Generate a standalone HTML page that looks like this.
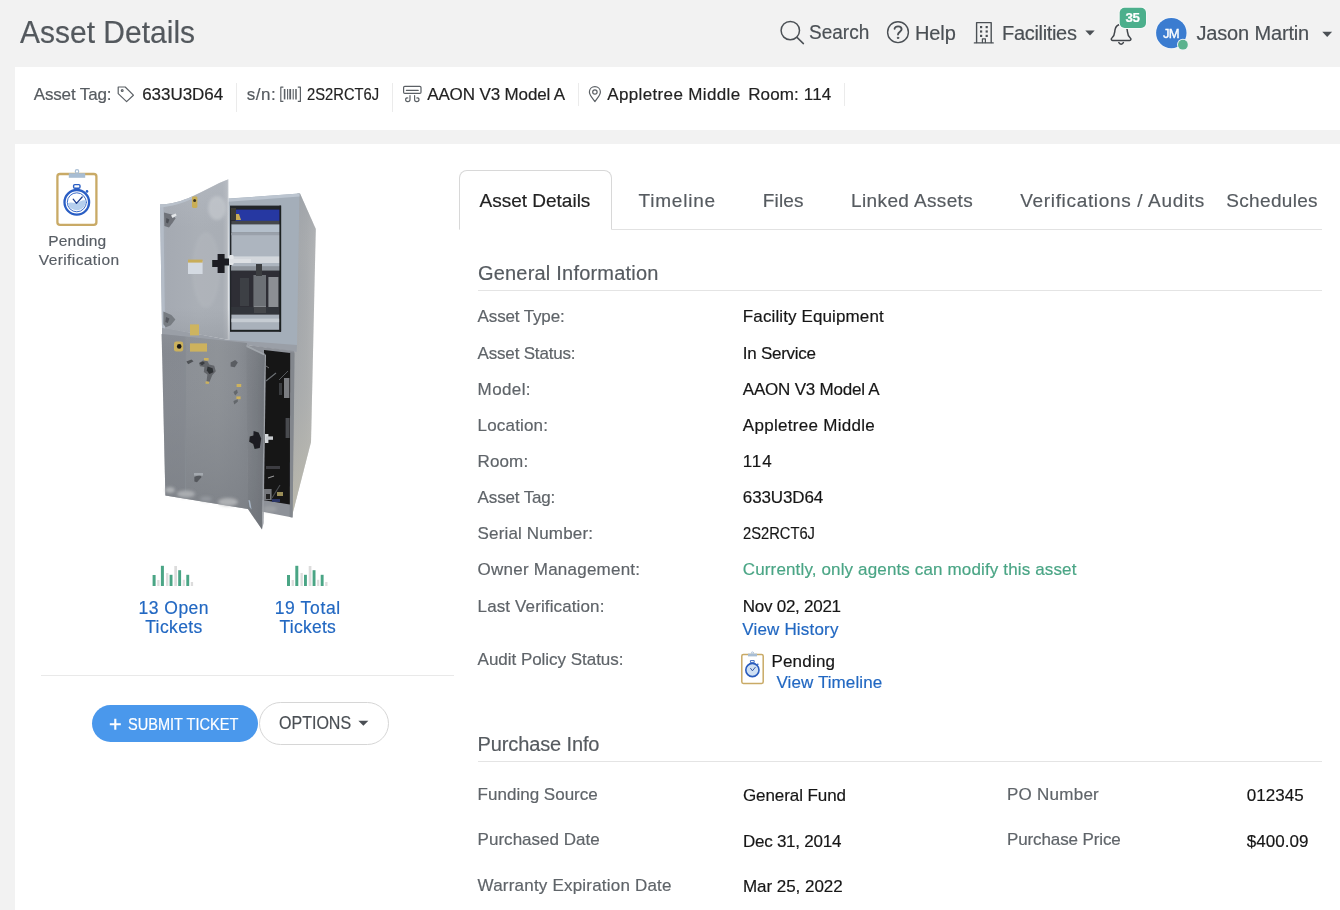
<!DOCTYPE html>
<html lang="en">
<head>
<meta charset="utf-8">
<title>Asset Details</title>
<style>
html,body{margin:0;padding:0;}
body{width:1340px;height:910px;overflow:hidden;background:#f2f2f2;font-family:"Liberation Sans",sans-serif;}
#page{position:relative;width:1340px;height:910px;overflow:hidden;}
#layer{position:absolute;left:0;top:0;width:1340px;height:910px;will-change:transform;transform:translateZ(0);}
.t{position:absolute;white-space:pre;line-height:1;font-family:"Liberation Sans",sans-serif;-webkit-text-stroke:0.18px;}
.abs{position:absolute;}
.panel{position:absolute;background:#fff;}
.sep{position:absolute;width:1px;background:#ebebeb;}
.hr{position:absolute;height:1px;background:#e4e4e4;}
svg{position:absolute;overflow:visible;}
</style>
</head>
<body>
<div id="page">
<div id="layer">

<!-- panels -->
<div class="panel" style="left:15px;top:67px;width:1325px;height:63px;"></div>
<div class="panel" style="left:15px;top:144px;width:1325px;height:766px;"></div>
<!-- info bar separators -->
<div class="sep" style="left:236px;top:83px;height:29px;"></div>
<div class="sep" style="left:392px;top:83px;height:29px;"></div>
<div class="sep" style="left:578px;top:83px;height:23px;"></div>
<div class="sep" style="left:844px;top:83px;height:23px;"></div>
<!-- left panel hr -->
<div class="hr" style="left:41px;top:675px;width:413px;background:#e9e9e9;"></div>
<!-- buttons -->
<div class="abs" style="left:92px;top:705px;width:166px;height:37px;border-radius:19px;background:#4a98ec;"></div>
<div class="abs" style="left:259px;top:702px;width:128px;height:41px;border-radius:22px;background:#fff;border:1px solid #d6d6d6;"></div>
<!-- tabs -->
<div class="hr" style="left:460px;top:229px;width:862px;background:#e2e2e2;"></div>
<div class="abs" style="left:459px;top:170px;width:151px;height:58px;border:1px solid #d8d8d8;border-bottom:1px solid #fff;border-radius:8px 8px 0 0;background:#fff;box-sizing:content-box;"></div>
<!-- section rules -->
<div class="hr" style="left:478px;top:290px;width:844px;"></div>
<div class="hr" style="left:478px;top:761px;width:844px;"></div>

<!-- cabinet photo approximation (page coordinates) -->
<svg style="left:0;top:0" width="1340" height="910" viewBox="0 0 1340 910">
  <defs>
    <filter id="soft" x="-5%" y="-5%" width="110%" height="110%"><feGaussianBlur stdDeviation="0.7"/></filter>
    <filter id="soft2" x="-20%" y="-20%" width="140%" height="140%"><feGaussianBlur stdDeviation="1.4"/></filter>
    <linearGradient id="gDoor" x1="0" y1="0" x2="1" y2="0">
      <stop offset="0" stop-color="#a6aeb9"/><stop offset="0.1" stop-color="#a5aab2"/>
      <stop offset="0.55" stop-color="#aaafb6"/><stop offset="0.9" stop-color="#a9aeb5"/>
      <stop offset="0.965" stop-color="#b4b8be"/><stop offset="0.985" stop-color="#dfe2e5"/><stop offset="1" stop-color="#d5d8dc"/>
    </linearGradient>
    <linearGradient id="gDoorV" x1="0" y1="0" x2="0" y2="1">
      <stop offset="0" stop-color="#b9bec6" stop-opacity="0.45"/><stop offset="0.3" stop-color="#b9bec6" stop-opacity="0"/>
      <stop offset="0.8" stop-color="#959aa1" stop-opacity="0"/><stop offset="1" stop-color="#8f949b" stop-opacity="0.45"/>
    </linearGradient>
    <linearGradient id="gSide" x1="0" y1="0" x2="1" y2="0">
      <stop offset="0" stop-color="#a0a4a9"/><stop offset="0.6" stop-color="#a8abae"/><stop offset="1" stop-color="#b3b5b7"/>
    </linearGradient>
    <linearGradient id="gSideV" x1="0" y1="0" x2="0" y2="1">
      <stop offset="0" stop-color="#989ea6" stop-opacity="0.5"/><stop offset="0.25" stop-color="#b0b0b0" stop-opacity="0"/>
      <stop offset="0.6" stop-color="#b8b7b0" stop-opacity="0.25"/><stop offset="1" stop-color="#cfc8ad" stop-opacity="0.6"/>
    </linearGradient>
    <linearGradient id="gLow" x1="0" y1="0" x2="1" y2="0">
      <stop offset="0" stop-color="#858990"/><stop offset="0.26" stop-color="#868a91"/>
      <stop offset="0.29" stop-color="#8c9096"/><stop offset="0.65" stop-color="#8f9398"/><stop offset="0.88" stop-color="#898d93"/><stop offset="1" stop-color="#82868c"/>
    </linearGradient>
    <linearGradient id="gLowV" x1="0" y1="0" x2="0" y2="1">
      <stop offset="0" stop-color="#9297a0" stop-opacity="0.35"/><stop offset="0.12" stop-color="#8f9398" stop-opacity="0"/>
      <stop offset="0.6" stop-color="#80848a" stop-opacity="0.4"/><stop offset="1" stop-color="#7c8086" stop-opacity="0.8"/>
    </linearGradient>
    <linearGradient id="gSDoorV" x1="0" y1="0" x2="0" y2="1">
      <stop offset="0" stop-color="#8d9197" stop-opacity="0.15"/><stop offset="0.35" stop-color="#7d8187" stop-opacity="0"/>
      <stop offset="1" stop-color="#6c7076" stop-opacity="0.5"/>
    </linearGradient>
    <linearGradient id="gSDoor" x1="0" y1="0" x2="1" y2="0">
      <stop offset="0" stop-color="#7f8389"/><stop offset="0.5" stop-color="#787c82"/><stop offset="1" stop-color="#6f7379"/>
    </linearGradient>
  </defs>
  <g filter="url(#soft)">
    <!-- side panel -->
    <path d="M297.4 193.5 L300 193.5 L315.8 229 L311 442 L291.6 517.5 L292 350 Z" fill="url(#gSide)"/>
    <path d="M297.4 193.5 L300 193.5 L315.8 229 L311 442 L291.6 517.5 L292 350 Z" fill="url(#gSideV)"/>
    <!-- upper body front -->
    <path d="M228 198.6 L299.4 193.6 L297 346 L228 342 Z" fill="#a4aeb9"/>
    <path d="M228 198.8 L299.4 193.6 L299.6 196.6 L228 201.8 Z" fill="#bcc5d0"/>
    <!-- upper opening -->
    <rect x="230" y="205.6" width="51" height="126" fill="#24262b"/>
    <rect x="235.6" y="209.6" width="45" height="11.8" fill="#2637a2"/>
    <rect x="231" y="208" width="5" height="12" fill="#3a3a36"/>
    <path d="M236 214 l3 0 l2 6 l-5 0 z" fill="#c9ad57"/>
    <rect x="231.4" y="224.2" width="49" height="8" fill="#b4bfcb"/>
    <rect x="231.4" y="220.8" width="49" height="3.4" fill="#45474b"/>
    <rect x="231.4" y="232.2" width="48.6" height="38.4" fill="#adb5bf"/>
    <rect x="231.4" y="233" width="48.6" height="2.2" fill="#9aa1ab"/>
    <rect x="232" y="256.4" width="48" height="6.6" fill="#d3d7dc"/>
    <rect x="231.4" y="266.2" width="48.6" height="4.6" fill="#8d939b"/>
    <rect x="231.4" y="270.6" width="48.6" height="44" fill="#2d2f34"/>
    <rect x="240" y="278" width="9" height="28" fill="#3d3f44"/>
    <rect x="253.4" y="275" width="12.6" height="33" fill="#6c6f74"/>
    <rect x="268.4" y="277" width="10" height="30" fill="#8c8f94"/>
    <rect x="256" y="264" width="6" height="12" fill="#3a3c40"/>
    <rect x="254" y="306" width="12" height="7" fill="#85888d"/>
    <rect x="231.4" y="307" width="48.6" height="7.6" fill="#35373c" opacity="0.8"/>
    <rect x="231.4" y="314.6" width="48" height="15.4" fill="#a9b1bb"/>
    <rect x="231.4" y="318.6" width="48" height="3.6" fill="#c6ccd3"/>
    <rect x="279.4" y="205.6" width="1.8" height="126" fill="#1f2023"/>
    <rect x="230" y="329.8" width="51" height="1.8" fill="#1f2023"/>
    <!-- strip between upper and lower -->
    <path d="M162 327 L229 340 L297 345 L296.6 352 L246 345 L162 339 Z" fill="#9a9fa7"/>
    <!-- lower front -->
    <path d="M161.6 334 L247 343 L248 509 L165.4 495.6 Z" fill="url(#gLow)"/>
    <path d="M161.6 334 L247 343 L248 509 L165.4 495.6 Z" fill="url(#gLowV)"/>
    <path d="M185 345 L185.6 492" stroke="#868b91" stroke-width="1.2" fill="none"/>
    <!-- lower opening -->
    <path d="M247 345 L294 351 L292.4 517.6 L248 509 Z" fill="#8e9299"/>
    <path d="M289.6 352 L294.6 352.6 L292.6 517.6 L289.6 517 Z" fill="#83878d"/>
    <path d="M264 350 L290.2 353 L289.8 504.6 L262.6 500 Z" fill="#151516"/>
    <rect x="284" y="378" width="5.4" height="20" fill="#7b7e82"/>
    <rect x="285.6" y="418" width="4" height="20" fill="#4a4c50"/>
    <path d="M266 381 L276 373" stroke="#6d7074" stroke-width="1.2"/>
    <path d="M279 380 L288 371" stroke="#55585c" stroke-width="1"/>
    <path d="M266 366 l3 2" stroke="#777" stroke-width="1"/>
    <rect x="279" y="383" width="3" height="12" fill="#3a3c40"/>
    <rect x="266" y="466" width="14" height="3" fill="#3c3e42"/>
    <rect x="263.6" y="489" width="8" height="11" fill="#74777b"/>
    <rect x="266" y="494" width="4" height="5" fill="#222"/>
    <path d="M268 478 l6 -2" stroke="#999" stroke-width="1.2"/>
    <path d="M272 498 L280 485" stroke="#4a4c50" stroke-width="1.2"/>
    <rect x="277" y="492" width="6" height="4" fill="#9b8e58"/>
    <rect x="272" y="499" width="8" height="3" fill="#2b3566"/>
    <!-- small open door -->
    <path d="M246.4 344.6 L264.4 353.6 L262 529.6 L247.6 508.6 Z" fill="url(#gSDoor)"/>
    <path d="M246.4 344.6 L264.4 353.6 L262 529.6 L247.6 508.6 Z" fill="url(#gSDoorV)"/>
    <path d="M264.4 353.6 L266 355 L263.6 523 L262 529.6 Z" fill="#9a9ea4"/>
    <path d="M246.4 344.6 L264.4 353.6 L264.4 355.6 L246.4 347 Z" fill="#a0a5ab"/>
    <!-- upper open door -->
    <path d="M160 204.6 C172 203.8 182 201 192 196.4 C205 190.4 216 184 228.4 179.2 L229.6 340 L162 327.8 Z" fill="url(#gDoor)"/>
    <path d="M160 204.6 C172 203.8 182 201 192 196.4 C205 190.4 216 184 228.4 179.2 L229.6 340 L162 327.8 Z" fill="url(#gDoorV)"/>
    <path d="M160 204.6 L163.4 204.4 L165 328.4 L162 327.8 Z" fill="#b4bcc7"/>
    <path d="M160 204.6 C172 203.8 182 201 192 196.4 L192 199 C182 203.4 172 206.4 160 207.4 Z" fill="#b9c1cb"/>
    <ellipse cx="217" cy="208" rx="9" ry="12" fill="#c9cdd2" opacity="0.6" filter="url(#soft2)"/>
    <ellipse cx="206" cy="270" rx="14" ry="38" fill="#b9bdc3" opacity="0.35" filter="url(#soft2)"/>
  </g>
  <g filter="url(#soft)">
    <!-- hinges -->
    <path d="M164 212.6 l7.6 2 l4 3.6 l-3 4.6 l-3.6 4.6 l-4.6 -1.4 z" fill="#6f737a"/>
    <path d="M171 215.4 l4.6 -2 l1 2 l-4 2.6 z" fill="#e4e7ea"/>
    <path d="M166.4 218 l3 1.4 l-1.4 4 l-2 -0.8 z" fill="#4d5056"/>
    <path d="M163.4 311.6 l8 3.4 l4 4.6 l-4.6 5.6 l-5 2 l-2.4 -3 z" fill="#777b82"/>
    <path d="M166 317 l3.4 1.6 l-1.6 4.4 l-2.4 -1 z" fill="#55585e"/>
    <!-- labels on door -->
    <rect x="192" y="196.4" width="5.4" height="11.6" rx="1.4" fill="#c9ae55"/>
    <circle cx="194.6" cy="200.6" r="1.5" fill="#3a3524"/>
    <rect x="188" y="261" width="14.6" height="13" fill="#d4dae2"/>
    <rect x="188" y="259.6" width="14.6" height="3" fill="#c8ad5a"/>
    <rect x="190" y="324.4" width="9" height="11" fill="#cdb45f"/>
    <!-- door handle -->
    <path d="M217.6 254 h7 v4.6 h4.4 v7 h-4.4 v7.4 h-7 v-6 h-5.4 v-7 h5.4 z" fill="#1d1e21"/>
    <rect x="229" y="255" width="4.6" height="10" rx="1.4" fill="#e3e6e9"/>
    <rect x="229" y="259" width="22" height="4" fill="#dde0e4"/>
    <!-- lower labels -->
    <rect x="174" y="341.6" width="9.2" height="10" rx="2.4" fill="#cbb15c"/>
    <circle cx="179.2" cy="346.4" r="2.3" fill="#191919"/>
    <rect x="190" y="343.4" width="17" height="8.2" fill="#cdb25d"/>
    <rect x="204" y="358" width="4.6" height="2.6" fill="#cdb25d"/>
    <rect x="205.6" y="381.4" width="3.4" height="2.4" fill="#cdb25d"/>
    <rect x="236.6" y="384" width="4.6" height="3" fill="#cdb25d"/>
    <rect x="236.4" y="396.4" width="4.2" height="2.8" fill="#cdb25d"/>
    <!-- dark blobs on lower front -->
    <g filter="url(#soft)">
    <path d="M186.4 361.6 l5 -2.2 l2.2 1.8 l-5.4 3 z" fill="#4f5257"/>
    <path d="M199 363 l4 -2.6 l4.6 0.8 l1.6 3.4 l5 1.2 l1.6 5.4 l-3.6 4 l-2.6 6.6 l-3 -0.8 l0.8 -6.4 l-3.6 -2.6 l0.6 -5 l-4.4 -0.8 z" fill="#62656a"/>
    <path d="M207.6 366.6 l5 1.6 l0.8 4 l-4 1.8 l-2.6 -3.4 z" fill="#2f3034"/>
    <path d="M199.4 363 l3.6 -1.6 l2 1.6 l-3 2.4 z" fill="#3a3c40"/>
    <path d="M230.6 362.6 l4.6 -2.6 l2.6 2.6 l-3 4.6 l-4.2 -0.8 z" fill="#5a5d62"/>
    <path d="M233.4 392 l3.6 -2.6 l0.8 3.4 l-2.6 2.6 z M233.4 401 l4.4 -1.8 l0 2.6 l-3.6 2.6 z" fill="#64676c"/>
    <path d="M194.4 477 l5.4 -2.6 l1.8 2.6 l-4.6 5.2 l-2.6 -0.8 z" fill="#55585d"/>
    <rect x="194" y="473" width="9" height="2.6" fill="#a4a9af"/>
    </g>
    <!-- latch on small door -->
    <path d="M253.6 431 l5 1.4 l2.6 6 l-1.4 9.6 l-5.2 1 l-1.4 -5 l-4 -2.2 l0.6 -5.4 l3.6 -1 z" fill="#1c1d20"/>
    <rect x="265" y="434" width="3.4" height="9" fill="#d8dbde"/>
    <rect x="266" y="436.4" width="7" height="3.4" fill="#c9ccd0"/>
    <!-- base patches -->
    <g filter="url(#soft2)">
      <ellipse cx="170" cy="490" rx="5" ry="3" fill="#b9bcbe" opacity="0.8"/>
      <ellipse cx="186" cy="494" rx="9" ry="3.4" fill="#b4b7ba" opacity="0.8"/>
      <ellipse cx="228" cy="502" rx="10" ry="4" fill="#b6b9bb" opacity="0.85"/>
      <ellipse cx="206" cy="499" rx="6" ry="2.4" fill="#9da1a6" opacity="0.7"/>
      <ellipse cx="270" cy="509" rx="7" ry="3" fill="#a4a7aa" opacity="0.7"/>
    </g>
    <path d="M248.4 500 l1.6 0.4 l1.6 9 l-2 -2.4 z" fill="#a9b6c6"/>
  </g>
</svg>

<!-- icon layer (page coordinates) -->
<svg style="left:0;top:0" width="1340" height="910" viewBox="0 0 1340 910" fill="none" stroke-linecap="round" stroke-linejoin="round">
  <!-- search -->
  <g stroke="#4b5055" stroke-width="1.5">
    <circle cx="790.3" cy="30.6" r="9.2"/>
    <path d="M797 37.4 L803.4 43.6"/>
  </g>
  <!-- help -->
  <g stroke="#4b5055" stroke-width="1.4">
    <circle cx="898" cy="32.2" r="10.4"/>
    <path d="M894.6 28.8 C894.6 25.6 901.6 25.4 901.6 29.2 C901.6 31.6 898 31.8 898 34.6" stroke-width="1.9"/>
    <circle cx="898" cy="37.9" r="0.8" fill="#4b5055" stroke-width="0.8"/>
  </g>
  <!-- building -->
  <g stroke="#4b5055" stroke-width="1.4">
    <path d="M976.6 42.6 V22.6 H991.2 V42.6"/>
    <path d="M974.4 42.9 H993.2"/>
    <path d="M982.4 42.6 V38.8 H985.4 V42.6" stroke-width="1.2"/>
  </g>
  <g fill="#4b5055">
    <rect x="980" y="26" width="2.2" height="2.2"/><rect x="985.6" y="26" width="2.2" height="2.2"/>
    <rect x="980" y="30.4" width="2.2" height="2.2"/><rect x="985.6" y="30.4" width="2.2" height="2.2"/>
    <rect x="980" y="34.8" width="2.2" height="2.2"/><rect x="985.6" y="34.8" width="2.2" height="2.2"/>
    <!-- carets -->
    <path d="M1085.3 30.6 H1094.7 L1090 35.4 Z"/>
    <path d="M1322.3 31.8 H1332.1 L1327.2 37 Z"/>
    <path d="M358.4 720.8 H368.4 L363.4 725.8 Z" fill="#4a4f54"/>
  </g>
  <!-- bell -->
  <g stroke="#42464b" stroke-width="1.5">
    <path d="M1112.6 40.4 C1111.2 40.4 1110.8 38.9 1111.9 38 C1115.2 35.2 1114.5 32.4 1115 29.8 C1115.6 26.2 1118 24.5 1121.1 24.5 C1124.2 24.5 1126.6 26.2 1127.2 29.8 C1127.7 32.4 1127 35.2 1130.3 38 C1131.4 38.9 1131 40.4 1129.6 40.4 Z"/>
    <path d="M1118.8 42.6 C1119.6 44.7 1122.6 44.7 1123.4 42.6"/>
  </g>
  <!-- badge -->
  <rect x="1118.7" y="6.8" width="28.3" height="22.2" rx="6" fill="#f8f8f8"/>
  <rect x="1119.7" y="7.8" width="26.3" height="20.2" rx="5" fill="#4caf8c"/>
  <!-- avatar -->
  <circle cx="1171.3" cy="33.1" r="15.9" fill="#f6f8fa"/>
  <circle cx="1171.3" cy="33.1" r="15.2" fill="#3b7cd0"/>
  <circle cx="1182.9" cy="44.7" r="5.9" fill="#eef2f6"/>
  <circle cx="1182.9" cy="44.7" r="4.9" fill="#5cb28f"/>

  <!-- tag -->
  <g stroke="#5b6065" stroke-width="1.2">
    <path d="M118.2 87 H125.2 L133.4 95.2 L126.6 101.6 L118.2 93.6 Z"/>
    <circle cx="122.2" cy="90.6" r="0.9"/>
  </g>
  <!-- barcode -->
  <g stroke="#5b6065" stroke-width="1.2" stroke-linecap="butt">
    <path d="M283.4 87.2 H280.8 V101.4 H283.4"/>
    <path d="M297.8 87.2 H300.4 V101.4 H297.8"/>
    <path d="M284.6 89 V99.4" stroke-width="1.6"/>
    <path d="M287.6 89 V99.4" stroke-width="1.1"/>
    <path d="M290.2 89 V99.4" stroke-width="1.8"/>
    <path d="M293.2 89 V99.4" stroke-width="1.1"/>
    <path d="M296 89 V99.4" stroke-width="1.5"/>
  </g>
  <!-- air conditioner -->
  <g stroke="#5b6065" stroke-width="1.2">
    <rect x="403.6" y="86.4" width="17.4" height="7" rx="1.2"/>
    <path d="M406.4 90.4 H418.2"/>
    <path d="M410 95.6 V99.6 C410 102.4 405.6 102.4 405.6 99.6 C405.6 98.2 406.8 97.6 407.8 98"/>
    <path d="M414.6 95.6 V99.6 C414.6 102.4 419 102.4 419 99.6 C419 98.2 417.8 97.6 416.8 98"/>
  </g>
  <!-- pin -->
  <g stroke="#5b6065" stroke-width="1.2">
    <path d="M594.9 101.6 C591.6 97.2 589.4 95 589.4 92 C589.4 88.8 591.9 86.6 594.9 86.6 C597.9 86.6 600.4 88.8 600.4 92 C600.4 95 598.2 97.2 594.9 101.6 Z"/>
    <circle cx="594.9" cy="92" r="2.2"/>
  </g>

  <!-- plus in submit -->
  <path d="M109.8 724.3 H120.8 M115.3 718.8 V729.8" stroke="#fff" stroke-width="2.1" stroke-linecap="butt"/>

  <!-- bar chart icons -->
  <g id="bars1">
    <g fill="#4aa585">
      <rect x="152.6" y="575" width="3" height="11"/>
      <rect x="160.9" y="565.8" width="3" height="20.2"/>
      <rect x="169.6" y="574.8" width="2.9" height="11.2"/>
      <rect x="178.2" y="570.2" width="2.9" height="15.8"/>
      <rect x="186.3" y="574.8" width="2.9" height="11.2"/>
    </g>
    <g fill="#dcdcdc">
      <rect x="157.2" y="580" width="2.3" height="6"/>
      <rect x="166.1" y="573" width="2.3" height="13"/>
      <rect x="174.3" y="566" width="2.7" height="20"/>
      <rect x="182.7" y="579.8" width="2.2" height="6.2"/>
      <rect x="190.8" y="582" width="2.3" height="4"/>
    </g>
  </g>
  <use href="#bars1" x="134.4" y="0"/>

  <!-- big clipboard -->
  <rect x="57.4" y="174" width="39" height="50.8" rx="2.6" stroke="#c9aa66" stroke-width="2.3" fill="#fff"/>
  <rect x="68.8" y="173.2" width="16.4" height="4.6" fill="#a8bdd3"/>
  <circle cx="77" cy="171.4" r="1.7" stroke="#a8bdd3" stroke-width="1.2" fill="#fff"/>
  <g>
    <circle cx="76.8" cy="202.3" r="12.3" stroke="#2a5ec4" stroke-width="2.3" fill="#fff"/>
    <circle cx="76.8" cy="202.3" r="9.5" stroke="#3a6bc8" stroke-width="1" fill="#fff"/>
    <path d="M67.6 203.6 C71 201 75 204.6 79 202 C82 200.2 84 199.8 86 200.6 A9.4 9.4 0 0 1 67.6 203.6 Z" fill="#b5cfee"/>
    <path d="M73.2 199.2 L76.5 203.4 L82.2 197" stroke="#20408f" stroke-width="1.3"/>
    <rect x="73.6" y="184.6" width="6.4" height="3.6" rx="1.2" stroke="#2a5ec4" stroke-width="1.4" fill="#fff"/>
    <path d="M75.4 188.4 V190.4 H78.2 V188.4" stroke="#2a5ec4" stroke-width="1.2"/>
    <circle cx="87" cy="191.4" r="1.3" fill="#2a5ec4"/>
  </g>

  <!-- small clipboard -->
  <rect x="741.8" y="654.4" width="21.4" height="29" rx="1.6" stroke="#c9aa66" stroke-width="1.5" fill="#fff"/>
  <rect x="748" y="653.6" width="9" height="2.8" fill="#a8bdd3"/>
  <circle cx="752.4" cy="652.8" r="1" stroke="#a8bdd3" stroke-width="0.8" fill="#fff"/>
  <circle cx="752.4" cy="670" r="6.6" stroke="#2a5cbd" stroke-width="1.6" fill="#cfe0f3"/>
  <path d="M750.6 668.4 L752.4 670.8 L755.2 667.4" stroke="#25469a" stroke-width="0.9"/>
  <rect x="750.8" y="660.6" width="3.4" height="2" stroke="#2a5cbd" stroke-width="0.9" fill="#fff"/>
  <circle cx="757.8" cy="664.2" r="0.8" fill="#2a5cbd"/>
</svg>
<span class="t" style="left:1125.5px;top:11.1px;font-size:13.4px;font-weight:700;color:#fff;letter-spacing:-0.35px;">35</span>
<span class="t" style="left:1162.9px;top:26.6px;font-size:13px;color:#fff;letter-spacing:-0.7px;-webkit-text-stroke:0.35px #fff;">JM</span>

<!-- text -->
<span class="t" style="left:20.2px;top:16.8px;font-size:31.5px;color:#53585d;transform:scaleX(0.9525);transform-origin:0 0">Asset Details</span>
<span class="t" style="left:808.6px;top:22.0px;font-size:20px;color:#4b5055;transform:scaleX(0.9501);transform-origin:0 0">Search</span>
<span class="t" style="left:914.9px;top:22.9px;font-size:20px;color:#4b5055;letter-spacing:-0.05px">Help</span>
<span class="t" style="left:1002.1px;top:23.4px;font-size:20px;color:#4b5055;letter-spacing:-0.33px">Facilities</span>
<span class="t" style="left:1196.4px;top:23.0px;font-size:20px;color:#4b5055;letter-spacing:-0.15px">Jason Martin</span>
<span class="t" style="left:33.7px;top:86.4px;font-size:17px;color:#565b60;letter-spacing:-0.14px">Asset Tag:</span>
<span class="t" style="left:142.2px;top:86.4px;font-size:17px;color:#222;letter-spacing:-0.04px">633U3D64</span>
<span class="t" style="left:246.7px;top:86.4px;font-size:17px;color:#565b60;letter-spacing:0.54px">s/n:</span>
<span class="t" style="left:307.2px;top:86.4px;font-size:17px;color:#222;transform:scaleX(0.8675);transform-origin:0 0">2S2RCT6J</span>
<span class="t" style="left:427.2px;top:86.4px;font-size:17px;color:#222;letter-spacing:-0.13px">AAON V3 Model A</span>
<span class="t" style="left:607.2px;top:86.4px;font-size:17px;color:#222;letter-spacing:0.36px">Appletree Middle</span>
<span class="t" style="left:748.2px;top:86.4px;font-size:17px;color:#222;letter-spacing:0.14px">Room: 114</span>
<span class="t" style="left:48.3px;top:233.4px;font-size:15.5px;color:#585e65;letter-spacing:0.17px">Pending</span>
<span class="t" style="left:38.8px;top:252.4px;font-size:15.5px;color:#585e65;letter-spacing:0.40px">Verification</span>
<span class="t" style="left:138.5px;top:599.6px;font-size:17.5px;color:#2268c2;letter-spacing:0.49px">13 Open</span>
<span class="t" style="left:145.2px;top:619.3px;font-size:17.5px;color:#2268c2;letter-spacing:0.38px">Tickets</span>
<span class="t" style="left:274.7px;top:599.6px;font-size:17.5px;color:#2268c2;letter-spacing:0.64px">19 Total</span>
<span class="t" style="left:279.5px;top:619.3px;font-size:17.5px;color:#2268c2;letter-spacing:0.25px">Tickets</span>
<span class="t" style="left:127.8px;top:716.8px;font-size:16px;color:#fff;transform:scaleX(0.9101);transform-origin:0 0">SUBMIT TICKET</span>
<span class="t" style="left:279.4px;top:715.1px;font-size:17.5px;color:#4a4f54;transform:scaleX(0.9159);transform-origin:0 0">OPTIONS</span>
<span class="t" style="left:479.6px;top:191.2px;font-size:19px;color:#222;letter-spacing:-0.01px">Asset Details</span>
<span class="t" style="left:638.6px;top:191.2px;font-size:19px;color:#565b60;letter-spacing:0.77px">Timeline</span>
<span class="t" style="left:762.8px;top:191.2px;font-size:19px;color:#565b60;letter-spacing:0.15px">Files</span>
<span class="t" style="left:851.1px;top:191.2px;font-size:19px;color:#565b60;letter-spacing:0.37px">Linked Assets</span>
<span class="t" style="left:1020.3px;top:191.2px;font-size:19px;color:#565b60;letter-spacing:0.66px">Verifications / Audits</span>
<span class="t" style="left:1226.3px;top:191.2px;font-size:19px;color:#565b60;letter-spacing:0.32px">Schedules</span>
<span class="t" style="left:477.9px;top:263.4px;font-size:20px;color:#565b60;letter-spacing:0.21px">General Information</span>
<span class="t" style="left:477.5px;top:734.3px;font-size:20px;color:#565b60;letter-spacing:-0.12px">Purchase Info</span>
<span class="t" style="left:477.6px;top:308.4px;font-size:17px;color:#5f6469;letter-spacing:-0.14px">Asset Type:</span>
<span class="t" style="left:742.8px;top:308.4px;font-size:17px;color:#161616;letter-spacing:0.12px">Facility Equipment</span>
<span class="t" style="left:477.6px;top:344.5px;font-size:17px;color:#5f6469;letter-spacing:-0.19px">Asset Status:</span>
<span class="t" style="left:742.8px;top:344.5px;font-size:17px;color:#161616;letter-spacing:-0.27px">In Service</span>
<span class="t" style="left:477.6px;top:380.6px;font-size:17px;color:#5f6469;letter-spacing:0.38px">Model:</span>
<span class="t" style="left:742.8px;top:380.6px;font-size:17px;color:#161616;letter-spacing:-0.21px">AAON V3 Model A</span>
<span class="t" style="left:477.6px;top:416.7px;font-size:17px;color:#5f6469;letter-spacing:0.17px">Location:</span>
<span class="t" style="left:742.8px;top:416.7px;font-size:17px;color:#161616;letter-spacing:0.29px">Appletree Middle</span>
<span class="t" style="left:477.6px;top:452.9px;font-size:17px;color:#5f6469;letter-spacing:0.11px">Room:</span>
<span class="t" style="left:742.8px;top:452.9px;font-size:17px;color:#161616;letter-spacing:0.86px">114</span>
<span class="t" style="left:477.6px;top:489.0px;font-size:17px;color:#5f6469;letter-spacing:-0.15px">Asset Tag:</span>
<span class="t" style="left:742.8px;top:489.0px;font-size:17px;color:#161616;letter-spacing:-0.11px">633U3D64</span>
<span class="t" style="left:477.6px;top:525.1px;font-size:17px;color:#5f6469;letter-spacing:0.15px">Serial Number:</span>
<span class="t" style="left:742.8px;top:525.1px;font-size:17px;color:#161616;transform:scaleX(0.8651);transform-origin:0 0">2S2RCT6J</span>
<span class="t" style="left:477.6px;top:561.2px;font-size:17px;color:#5f6469;letter-spacing:0.23px">Owner Management:</span>
<span class="t" style="left:742.8px;top:561.2px;font-size:17px;color:#4aa585;letter-spacing:0.14px">Currently, only agents can modify this asset</span>
<span class="t" style="left:477.6px;top:597.8px;font-size:17px;color:#5f6469;letter-spacing:0.12px">Last Verification:</span>
<span class="t" style="left:742.8px;top:597.8px;font-size:17px;color:#161616;letter-spacing:-0.26px">Nov 02, 2021</span>
<span class="t" style="left:742.2px;top:620.6px;font-size:17px;color:#2268c2;letter-spacing:0.19px">View History</span>
<span class="t" style="left:477.6px;top:650.5px;font-size:17px;color:#5f6469;letter-spacing:-0.03px">Audit Policy Status:</span>
<span class="t" style="left:771.4px;top:653.2px;font-size:17px;color:#161616;letter-spacing:0.21px">Pending</span>
<span class="t" style="left:776.5px;top:674.0px;font-size:17px;color:#2268c2;letter-spacing:0.09px">View Timeline</span>
<span class="t" style="left:477.6px;top:785.9px;font-size:17px;color:#5f6469;letter-spacing:0.01px">Funding Source</span>
<span class="t" style="left:742.9px;top:787.2px;font-size:17px;color:#161616;letter-spacing:-0.07px">General Fund</span>
<span class="t" style="left:477.6px;top:831.2px;font-size:17px;color:#5f6469;letter-spacing:0.02px">Purchased Date</span>
<span class="t" style="left:742.9px;top:832.5px;font-size:17px;color:#161616;letter-spacing:-0.24px">Dec 31, 2014</span>
<span class="t" style="left:477.6px;top:876.5px;font-size:17px;color:#5f6469;letter-spacing:0.20px">Warranty Expiration Date</span>
<span class="t" style="left:742.9px;top:877.9px;font-size:17px;color:#161616;letter-spacing:-0.03px">Mar 25, 2022</span>
<span class="t" style="left:1007.0px;top:785.9px;font-size:17px;color:#5f6469;letter-spacing:0.25px">PO Number</span>
<span class="t" style="left:1246.8px;top:786.8px;font-size:17px;color:#161616;letter-spacing:0.04px">012345</span>
<span class="t" style="left:1007.0px;top:831.3px;font-size:17px;color:#5f6469;letter-spacing:-0.12px">Purchase Price</span>
<span class="t" style="left:1246.8px;top:832.5px;font-size:17px;color:#161616;letter-spacing:0.05px">$400.09</span>
</div>
</div>
</body>
</html>
